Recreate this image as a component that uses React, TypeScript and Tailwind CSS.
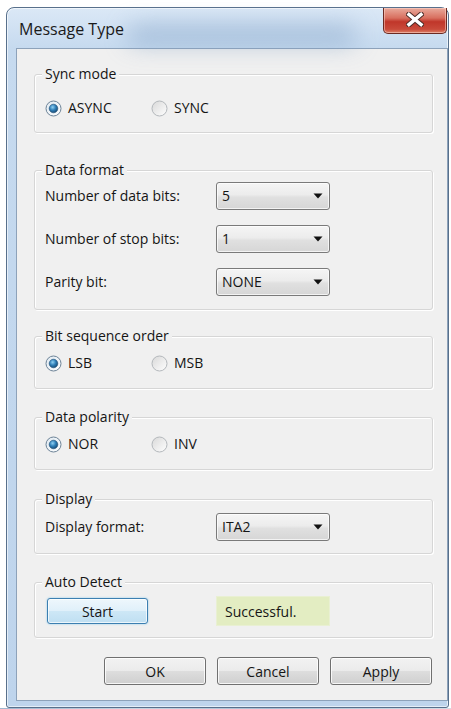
import React from "react";

const ui = "font-['Open_Sans',sans-serif] text-[14px] text-[#151515]";

interface RadioProps {
  label: string;
  checked?: boolean;
}

const Radio: React.FC<RadioProps> = ({ label, checked }) => (
  <div className="flex items-center gap-[6px] w-[106px] h-[20px]">
    <svg width="17" height="17" viewBox="0 0 17 17">
      <defs>
        <linearGradient id={checked ? "rOn" : "rOff"} x1="0" y1="0" x2="1" y2="1">
          <stop offset="0" stopColor={checked ? "#dfe9f1" : "#d8d8d8"} />
          <stop offset="1" stopColor="#ffffff" />
        </linearGradient>
        <radialGradient id="rDot" cx="0.4" cy="0.35" r="0.7">
          <stop offset="0" stopColor="#8fd0f2" />
          <stop offset="0.5" stopColor="#2f7fb8" />
          <stop offset="1" stopColor="#16476f" />
        </radialGradient>
      </defs>
      <circle
        cx="8.5"
        cy="8.5"
        r="7.5"
        fill={`url(#${checked ? "rOn" : "rOff"})`}
        stroke={checked ? "#6d8397" : "#b4b8bc"}
        strokeWidth="1"
      />
      {checked && <circle cx="8.5" cy="8.5" r="4.3" fill="url(#rDot)" stroke="#1f4e75" strokeWidth="0.6" />}
    </svg>
    <span className="leading-[20px]">{label}</span>
  </div>
);

const Select: React.FC<{ value: string }> = ({ value }) => (
  <div className="w-[114px] h-[28px] flex items-center justify-between pl-[5px] pr-[6px] border border-[#7a7a7a] rounded-[3px] bg-[linear-gradient(to_bottom,#f5f5f5_0%,#ececec_45%,#e0e0e0_55%,#d6d6d6_100%)] shadow-[inset_0_0_0_1px_rgba(255,255,255,0.7)]">
    <span className="leading-[20px]">{value}</span>
    <svg width="10" height="6" viewBox="0 0 10 6">
      <path d="M0.5 0.5 H9.5 L5 5.5 Z" fill="#111" />
    </svg>
  </div>
);

interface GroupProps {
  title: string;
  className?: string;
  children: React.ReactNode;
}

const Group: React.FC<GroupProps> = ({ title, className = "", children }) => (
  <div
    className={`ml-[17px] w-[399px] pl-[10px] border border-[#d6d6d6] rounded-[3px] shadow-[inset_1px_1px_0_#ffffff,1px_1px_0_#ffffff] ${className}`}
  >
    <div className="-mt-[10px] -ml-[3px] w-fit px-[3px] bg-[#f0f0f0] leading-[18px]">{title}</div>
    {children}
  </div>
);

const Button: React.FC<{ label: string; className?: string }> = ({ label, className = "" }) => (
  <div
    className={`h-[28px] flex items-center justify-center border border-[#707070] rounded-[3px] bg-[linear-gradient(to_bottom,#f2f2f2_0%,#ebebeb_48%,#dddddd_52%,#cfcfcf_100%)] shadow-[inset_0_0_0_1px_rgba(255,255,255,0.8)] ${className}`}
  >
    {label}
  </div>
);

const Row: React.FC<{ label: string; value: string; className?: string }> = ({ label, value, className = "" }) => (
  <div className={`flex items-center h-[28px] ${className}`}>
    <span className="w-[171px] leading-[20px]">{label}</span>
    <Select value={value} />
  </div>
);

export default function App() {
  return (
    <div className={`${ui} w-[451px] h-[709px] bg-white overflow-hidden`}>
      <div className="ml-[6px] mt-[7px] w-[443px] border border-[#58708c] rounded-t-[8px] rounded-b-[3px] bg-[linear-gradient(to_bottom,#dbe8f6_0px,#c6daef_40px,#bed4ec_100%)] shadow-[inset_0_0_0_1px_rgba(255,255,255,0.6)]">
        {/* title bar */}
        <div className="relative h-[40px] flex justify-between">
          <span className="absolute left-[120px] top-[18px] w-[230px] h-[18px] rounded-full bg-[#7f9fc4] opacity-60 blur-md" />
          <span className="relative pl-[12px] self-center text-[16px] leading-[22px] text-[#1a1a1a] mt-[1px]">Message Type</span>
          <div className="relative mr-[1px] w-[64px] h-[26px] flex items-center justify-center border border-t-0 border-[#6b2a22] rounded-b-[5px] bg-[linear-gradient(to_bottom,#e9aa9c_0%,#d86f5f_40%,#c0362a_55%,#c94a3a_85%,#dc8068_100%)] shadow-[inset_0_0_0_1px_rgba(255,220,210,0.5)]">
            <svg width="18" height="15" viewBox="0 0 18 15" className="-mt-[3px]">
              <path d="M3 2.5 L15 12.5 M15 2.5 L3 12.5" stroke="#4a2a26" strokeWidth="5.5" strokeLinecap="square" />
              <path d="M3 2.5 L15 12.5 M15 2.5 L3 12.5" stroke="#ffffff" strokeWidth="3.5" strokeLinecap="square" />
            </svg>
          </div>
        </div>

        {/* client area */}
        <div className="ml-[9px] w-[432px] mb-[6px] border border-[#8da2ba] bg-[#f0f0f0] pb-[15px]">
          <Group title="Sync mode" className="mt-[25px] pb-[14px]">
            <div className="flex mt-[15px]">
              <Radio label="ASYNC" checked />
              <Radio label="SYNC" />
            </div>
          </Group>

          <Group title="Data format" className="mt-[37px] pb-[13px]">
            <Row label="Number of data bits:" value="5" className="mt-[3px]" />
            <Row label="Number of stop bits:" value="1" className="mt-[15px]" />
            <Row label="Parity bit:" value="NONE" className="mt-[15px]" />
          </Group>

          <Group title="Bit sequence order" className="mt-[26px] pb-[15px]">
            <div className="flex mt-[8px]">
              <Radio label="LSB" checked />
              <Radio label="MSB" />
            </div>
          </Group>

          <Group title="Data polarity" className="mt-[28px] pb-[15px]">
            <div className="flex mt-[8px]">
              <Radio label="NOR" checked />
              <Radio label="INV" />
            </div>
          </Group>

          <Group title="Display" className="mt-[29px] pb-[12px]">
            <Row label="Display format:" value="ITA2" className="mt-[5px]" />
          </Group>

          <Group title="Auto Detect" className="mt-[28px] pb-[11px]">
            <div className="flex items-center h-[30px] mt-[5px]">
              <div className="ml-[2px] w-[101px] h-[26px] flex items-center justify-center border border-[#3c7fb1] rounded-[3px] bg-[linear-gradient(to_bottom,#eef7fc_0%,#e0f0fa_48%,#cde7f6_52%,#bfdff2_100%)] shadow-[inset_0_0_0_1px_rgba(255,255,255,0.7),0_0_2px_#7ec4ea]">
                Start
              </div>
              <div className="ml-[68px] w-[114px] h-[30px] flex items-center pl-[8px] bg-[#e3edc2] border border-[#e9f0d3]">
                Successful.
              </div>
            </div>
          </Group>

          <div className="ml-[17px] w-[399px] mt-[19px] flex justify-end gap-[11px] pr-[1px]">
            <Button label="OK" className="w-[102px]" />
            <Button label="Cancel" className="w-[102px]" />
            <Button label="Apply" className="w-[102px]" />
          </div>
        </div>
      </div>
      <div className="h-[2px] bg-[linear-gradient(to_right,#9fb6cf,#c7d4e2_30%,#a8bdd3_60%,#d4dde7)]" />
    </div>
  );
}
